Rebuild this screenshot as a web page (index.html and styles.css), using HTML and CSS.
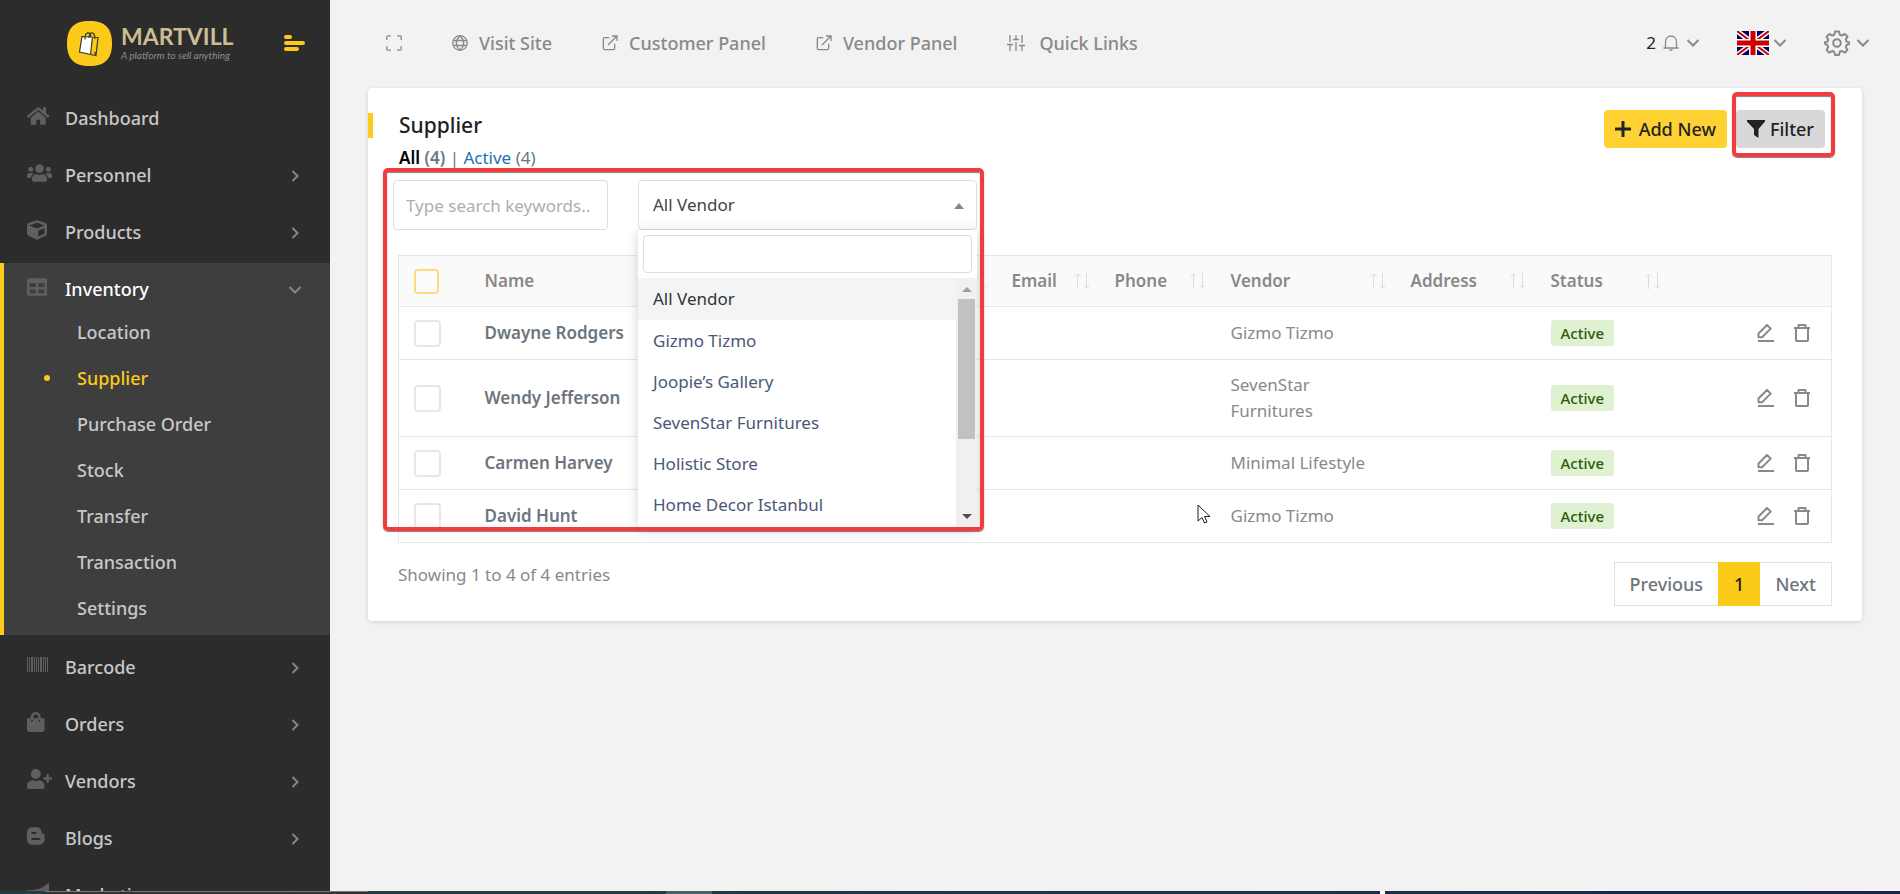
FILE: index.html
```html
<!DOCTYPE html>
<html lang="en">
<head>
  <meta charset="UTF-8" />
  <meta name="viewport" content="width=device-width, initial-scale=1.0"/>
  <title>Supplier | Martvill</title>
  <link rel="stylesheet" href="styles.css">
</head>
<body>
  <!-- shared icons -->
  <svg class="sprite" aria-hidden="true">
    <symbol id="chevron" viewBox="0 0 12 12"><path d="M3.500 1l5 5-5 5" /></symbol>
    <symbol id="chevron-down" viewBox="0 0 14 10"><path d="M1.500 2l5.500 5.500L12.500 2" /></symbol>
    <symbol id="external" viewBox="0 0 24 24"><path d="M19 13v7a2 2 0 0 1-2 2H4a2 2 0 0 1-2-2V6a2 2 0 0 1 2-2h7M15 1.500h7.500V9M9 15L22 2" /></symbol>
    <symbol id="sort" viewBox="0 0 16 16"><path d="M3.500 16V1M.5 4l3-3 3 3M12.500 0v15M9.500 12l3 3 3-3" /></symbol>
    <symbol id="edit" viewBox="0 0 18 18"><path d="M1 17h16M1.500 13.200v-3.700L10 1l3.700 3.600-8.600 8.600z" /></symbol>
    <symbol id="trash" viewBox="0 0 18 18"><path d="M1 4h16M5.500 4V1h7v3M3 4V16.200q0 .8.800.8h10.400q.8 0 .8-.8V4" /></symbol>
  </svg>

  <aside class="sidebar">
    <div class="brand">
      <a href="#" class="logo">
        <svg class="logo-mark" viewBox="0 0 45 45">
          <path d="M22.500 0C38 0 45 7 45 22.500S38 45 22.500 45 0 38 0 22.500 7 0 22.500 0z" fill="#fcca19"/>
          <path d="M15 15.500l10 .5-1.500 17.500L12.500 31z" fill="#fff"/>
          <path d="M15 15.500l16 1-2 18-5.500-1L12.500 31zM25.500 16l-2 17.500M18 18.500c-.5-8 6-9 6-2M22 17c0-7 6-7 6 1M29 34.500l-1.500-3.500" fill="none" stroke="#3a3a2a" stroke-width="1.200"/>
        </svg>
        <span class="logo-text">
          <b>MARTVILL</b>
          <i>A platform to sell anything</i>
        </span>
      </a>
      <button class="menu-toggle" aria-label="Toggle menu"><span></span><span></span><span></span></button>
    </div>

    <ul class="nav">
      <li><a href="#" class="nav-link">
        <svg class="nav-icon" viewBox="0 0 576 512" preserveAspectRatio="xMinYMid"><path d="M280 148L96 300v164a16 16 0 0 0 16 16h112a16 16 0 0 0 16-16v-96a16 16 0 0 1 16-16h64a16 16 0 0 1 16 16v96a16 16 0 0 0 16 16h112a16 16 0 0 0 16-16V300L296 148a12 12 0 0 0-16 0zM572 252l-84-69V44a12 12 0 0 0-12-12h-56a12 12 0 0 0-12 12v73l-90-74a48 48 0 0 0-61 0L4 252a12 12 0 0 0-1 16l25 31a12 12 0 0 0 17 2l235-194a12 12 0 0 1 15 0l235 194a12 12 0 0 0 17-2l26-31a12 12 0 0 0-1-16z"/></svg>
        Dashboard</a></li>
      <li><a href="#" class="nav-link">
        <svg class="nav-icon" viewBox="0 0 640 512" preserveAspectRatio="xMinYMid"><path d="M96 224a64 64 0 1 0 0-128 64 64 0 0 0 0 128zm448 0a64 64 0 1 0 0-128 64 64 0 0 0 0 128zm32 32h-64c-18 0-34 7-45 19a146 146 0 0 1 75 109h66a32 32 0 0 0 32-32v-32c0-35-29-64-64-64zm-256 0a112 112 0 1 0 0-224 112 112 0 0 0 0 224zm77 32h-8a155 155 0 0 1-138 0h-8c-64 0-115 51-115 115v29c0 26 21 48 48 48h288c27 0 48-22 48-48v-29c0-64-51-115-115-115zm-224-13c-11-12-27-19-45-19H64c-35 0-64 29-64 64v32a32 32 0 0 0 32 32h66c6-47 34-87 75-109z"/></svg>
        Personnel<svg class="arrow"><use href="#chevron"/></svg></a></li>
      <li><a href="#" class="nav-link">
        <svg class="nav-icon" viewBox="0 0 512 512" preserveAspectRatio="xMinYMid"><path d="M239 6l-208 78a48 48 0 0 0-31 45v225a48 48 0 0 0 27 43l208 104a48 48 0 0 0 43 0l208-104a48 48 0 0 0 26-43V129c0-20-12-38-31-45L273 6a48 48 0 0 0-34 0zM256 68l192 72v1l-192 78-192-78v-1zm32 356V275l160-65v134z"/></svg>
        Products<svg class="arrow"><use href="#chevron"/></svg></a></li>
      <li class="open"><a href="#" class="nav-link">
        <svg class="nav-icon" viewBox="0 0 512 512" preserveAspectRatio="xMinYMid"><path d="M464 32H48a48 48 0 0 0-48 48v352a48 48 0 0 0 48 48h416a48 48 0 0 0 48-48V80a48 48 0 0 0-48-48zM224 416H64v-96h160zm0-160H64v-96h160zm224 160H288v-96h160zm0-160H288v-96h160z"/></svg>
        Inventory<svg class="arrow"><use href="#chevron-down"/></svg></a>
        <ul class="subnav">
          <li><a href="#">Location</a></li>
          <li class="active"><a href="#">Supplier</a></li>
          <li><a href="#">Purchase Order</a></li>
          <li><a href="#">Stock</a></li>
          <li><a href="#">Transfer</a></li>
          <li><a href="#">Transaction</a></li>
          <li><a href="#">Settings</a></li>
        </ul>
      </li>
      <li><a href="#" class="nav-link">
        <svg class="nav-icon" viewBox="0 0 21 20" preserveAspectRatio="xMinYMid"><path d="M0 2h1v15H0zM2 2h1v15H2zM4 2h2v15H4zM7 2h1v15H7zM9 2h1v15H9zM11 2h1v15h-1zM13 2h2v15h-2zM16 2h1v15h-1zM18 2h1v15h-1zM20 2h1v15h-1z"/></svg>
        Barcode<svg class="arrow"><use href="#chevron"/></svg></a></li>
      <li><a href="#" class="nav-link">
        <svg class="nav-icon" viewBox="0 0 448 512" preserveAspectRatio="xMinYMid"><path d="M352 160v-32a128 128 0 0 0-256 0v32H0v272a80 80 0 0 0 80 80h288a80 80 0 0 0 80-80V160zm-192-32a64 64 0 0 1 128 0v32H160zm160 120a24 24 0 1 1 0-48 24 24 0 0 1 0 48zm-192 0a24 24 0 1 1 0-48 24 24 0 0 1 0 48z"/></svg>
        Orders<svg class="arrow"><use href="#chevron"/></svg></a></li>
      <li><a href="#" class="nav-link">
        <svg class="nav-icon" viewBox="0 0 640 512" preserveAspectRatio="xMinYMid"><path d="M624 208h-64v-64a16 16 0 0 0-16-16h-32a16 16 0 0 0-16 16v64h-64a16 16 0 0 0-16 16v32a16 16 0 0 0 16 16h64v64a16 16 0 0 0 16 16h32a16 16 0 0 0 16-16v-64h64a16 16 0 0 0 16-16v-32a16 16 0 0 0-16-16zM224 256a128 128 0 1 0 0-256 128 128 0 0 0 0 256zm90 32h-17a174 174 0 0 1-146 0h-17A134 134 0 0 0 0 422v42a48 48 0 0 0 48 48h352a48 48 0 0 0 48-48v-42a134 134 0 0 0-134-134z"/></svg>
        Vendors<svg class="arrow"><use href="#chevron"/></svg></a></li>
      <li><a href="#" class="nav-link">
        <svg class="nav-icon" viewBox="0 0 448 512" preserveAspectRatio="xMinYMid"><path fill-rule="evenodd" d="M446 222c-2-6-8-14-13-18-7-5-39-1-51-11-8-8-7-21-10-41-7-43-15-60-31-83C316 35 265 32 235 32H125C53 32 0 91 0 155v200c0 64 52 125 125 125h193c67 0 129-52 130-125V245zM135 155h80c20 0 29 10 29 24s-10 24-29 24h-80c-16 0-26-10-26-24s10-24 26-24zm178 205H136c-17 0-28-11-28-25s11-25 28-25h177c18 0 27 11 27 25s-9 25-27 25z"/></svg>
        Blogs<svg class="arrow"><use href="#chevron"/></svg></a></li>
      <li><a href="#" class="nav-link">
        <svg class="nav-icon" viewBox="0 0 24 20" preserveAspectRatio="xMinYMid"><path d="M0 7q13 1 20-6l2-1v18l-2-1q-5-4-11-5l2 6H6l-2-6H0zM19 4v9q-4-3-8-3.500V7.500Q15 7 19 4z"/></svg>
        Marketing<svg class="arrow"><use href="#chevron"/></svg></a></li>
    </ul>
  </aside>

  <div class="main">
    <header class="topbar">
      <nav class="top-links">
        <a href="#" aria-label="Full screen"><svg class="icon" viewBox="0 0 16 16"><path d="M.8 5V2Q.8.800 2 .8h3M11 .8h3q1.200 0 1.200 1.200v3M15.200 11v3q0 1.200-1.200 1.200h-3M5 15.200H2Q.8 15.200.8 14v-3"/></svg></a>
        <a href="#"><svg class="icon" viewBox="0 0 16 16"><circle cx="8" cy="8" r="7.300"/><path d="M1.500 5.500h13M1.500 10.500h13M8 .7c-5 5-5 9.600 0 14.600M8 .7c5 5 5 9.600 0 14.600"/></svg>Visit Site</a>
        <a href="#"><svg class="icon thick"><use href="#external"/></svg>Customer Panel</a>
        <a href="#"><svg class="icon thick"><use href="#external"/></svg>Vendor Panel</a>
        <a href="#"><svg class="icon wide" viewBox="0 0 18 16"><path d="M3 0v7M0 9.500h6M3 9.500V16M9 0v4.500M6 4.500h6M9 7v9M15 0v8M12 10.500h6M15 10.500V16"/></svg>Quick Links</a>
      </nav>
      <div class="top-tools">
        <button class="tool">2
          <svg class="icon" viewBox="0 0 16 16"><path d="M.5 13h15M2.500 12.500V6.500a5.500 5.500 0 0 1 11 0v6M6.500 14.500q1.500 1.500 3 0"/></svg>
          <svg class="caret"><use href="#chevron-down"/></svg>
        </button>
        <button class="tool lang" aria-label="Language">
          <svg class="flag" viewBox="0 0 32 24">
            <path fill="#006" d="M0 0h32v24H0z"/>
            <path stroke="#fff" stroke-width="5" d="M0 0l32 24M32 0L0 24"/>
            <path stroke="#c00" stroke-width="2" d="M0 0l32 24M32 0L0 24"/>
            <path stroke="#fff" stroke-width="8" d="M16 0v24M0 12h32"/>
            <path stroke="#c00" stroke-width="5" d="M16 0v24M0 12h32"/>
          </svg>
          <svg class="caret"><use href="#chevron-down"/></svg>
        </button>
        <button class="tool settings" aria-label="Settings">
          <svg class="gear" viewBox="0 0 26 26"><circle cx="13" cy="13" r="3.800"/><path d="M11 1.500h4l.8 3.300 2 .8 2.900-1.700 2.800 2.800-1.700 2.900.8 2 3.300.8v1.200l-3.300 1.400-.8 2 1.700 2.900-2.800 2.800-2.900-1.700-2 .8-.8 3.200h-4l-.8-3.200-2-.8-2.900 1.700-2.800-2.800 1.700-2.900-.8-2L1 13.800v-1.600l2.400-.6.8-2-1.700-2.900 2.800-2.800 2.900 1.700 2-.8z"/></svg>
          <svg class="caret"><use href="#chevron-down"/></svg>
        </button>
      </div>
    </header>

    <main class="card">
      <div class="card-head">
        <div>
          <h1>Supplier</h1>
          <p class="status-links"><a href="#" class="current">All</a> <b>(4)</b> | <a href="#">Active</a> (4)</p>
        </div>
        <div class="actions">
          <button class="btn btn-primary"><svg class="plus" viewBox="0 0 16 16"><path d="M8 1v14M1 8h14"/></svg>Add New</button>
          <button class="btn btn-filter"><svg class="funnel" viewBox="0 0 18 18"><path d="M0 0h18v1.500L11.500 9v9L7 15V9L0 1.500z"/></svg>Filter</button>
          <span class="mark"></span>
        </div>
      </div>

      <div class="filters">
        <input type="text" class="search" aria-label="Search" placeholder="Type search keywords..">
        <div class="vendor">
          <select class="vendor-select" aria-label="Vendor"><option>All Vendor</option></select>
          <div class="dropdown">
            <input type="text" aria-label="Search vendor">
            <div class="options">
              <ul>
                <li class="selected">All Vendor</li>
                <li>Gizmo Tizmo</li>
                <li>Joopie’s Gallery</li>
                <li>SevenStar Furnitures</li>
                <li>Holistic Store</li>
                <li>Home Decor Istanbul</li>
              </ul>
              <div class="scrollbar"><span class="scroll-up"></span><span class="thumb"></span><span class="scroll-down"></span></div>
            </div>
          </div>
        </div>
        <span class="mark"></span>
      </div>

      <div class="table-wrap">
        <table>
          <colgroup>
            <col class="c-check"><col><col class="c-email"><col class="c-phone"><col class="c-vendor"><col class="c-address"><col class="c-status"><col class="c-action">
          </colgroup>
          <thead>
            <tr>
              <th><input type="checkbox" class="check-all" aria-label="Select all"></th>
              <th><div>Name<svg class="sort"><use href="#sort"/></svg></div></th>
              <th><div>Email<svg class="sort"><use href="#sort"/></svg></div></th>
              <th><div>Phone<svg class="sort"><use href="#sort"/></svg></div></th>
              <th><div>Vendor<svg class="sort"><use href="#sort"/></svg></div></th>
              <th><div>Address<svg class="sort"><use href="#sort"/></svg></div></th>
              <th><div>Status<svg class="sort"><use href="#sort"/></svg></div></th>
              <th></th>
            </tr>
          </thead>
          <tbody>
            <tr>
              <td><input type="checkbox" aria-label="Dwayne Rodgers"></td>
              <td><a href="#">Dwayne Rodgers</a></td><td></td><td></td>
              <td>Gizmo Tizmo</td><td></td>
              <td><span class="badge">Active</span></td>
              <td class="row-actions"><button aria-label="Edit"><svg><use href="#edit"/></svg></button><button aria-label="Delete"><svg><use href="#trash"/></svg></button></td>
            </tr>
            <tr>
              <td><input type="checkbox" aria-label="Wendy Jefferson"></td>
              <td><a href="#">Wendy Jefferson</a></td><td></td><td></td>
              <td>SevenStar Furnitures</td><td></td>
              <td><span class="badge">Active</span></td>
              <td class="row-actions"><button aria-label="Edit"><svg><use href="#edit"/></svg></button><button aria-label="Delete"><svg><use href="#trash"/></svg></button></td>
            </tr>
            <tr>
              <td><input type="checkbox" aria-label="Carmen Harvey"></td>
              <td><a href="#">Carmen Harvey</a></td><td></td><td></td>
              <td>Minimal Lifestyle</td><td></td>
              <td><span class="badge">Active</span></td>
              <td class="row-actions"><button aria-label="Edit"><svg><use href="#edit"/></svg></button><button aria-label="Delete"><svg><use href="#trash"/></svg></button></td>
            </tr>
            <tr>
              <td><input type="checkbox" aria-label="David Hunt"></td>
              <td><a href="#">David Hunt</a></td><td></td><td></td>
              <td>Gizmo Tizmo</td><td></td>
              <td><span class="badge">Active</span></td>
              <td class="row-actions"><button aria-label="Edit"><svg><use href="#edit"/></svg></button><button aria-label="Delete"><svg><use href="#trash"/></svg></button></td>
            </tr>
          </tbody>
        </table>
      </div>

      <div class="card-foot">
        <p>Showing 1 to 4 of 4 entries</p>
        <div class="pagination">
          <button>Previous</button><button class="current">1</button><button>Next</button>
        </div>
      </div>
    </main>
  </div>

  <svg class="cursor" viewBox="0 0 14 20"><path d="M1 1v16l4-3.500L7.500 19l2.500-1-2.500-5.500H13z"/></svg>
  <div class="taskbar"><span class="task"></span><span class="task-light"></span><span class="task-dot"></span></div>
</body>
</html>
```
FILE: styles.css
```css
* { box-sizing: border-box; }
body {
  margin: 0;
  height: 100vh;
  display: flex;
  overflow: hidden;
  background: #f2f2f2;
  color: #898989;
  font: 17px/26px "Noto Sans", "Open Sans", sans-serif;
}
a { color: inherit; text-decoration: none; }
ul { list-style: none; margin: 0; padding: 0; }
h1, p { margin: 0; }
button, input, select { font: inherit; color: inherit; }
button { border: 0; background: none; padding: 0; cursor: pointer; }
svg { flex: none; }
.sprite { position: absolute; width: 0; height: 0; }

/* sidebar */
.sidebar {
  width: 330px;
  flex: none;
  overflow: hidden;
  background: #2c2c2c;
  color: #c8c8c8;
  font-size: 18px;
  font-weight: 500;
}
.brand {
  height: 86px;
  padding: 0 25px 0 67px;
  display: flex;
  align-items: center;
  justify-content: space-between;
}
.logo { display: flex; align-items: center; gap: 9px; }
.logo-mark { width: 45px; height: 45px; }
.logo-text { display: flex; flex-direction: column; font-family: Lato, sans-serif; }
.logo-text b { font-size: 23px; line-height: 24px; color: #cbbd94; }
.logo-text i { font-size: 10px; line-height: 14px; font-weight: 400; color: #8f8f8f; }
.menu-toggle { width: 21px; display: flex; flex-direction: column; gap: 2px; }
.menu-toggle span { height: 4px; border-radius: 2px; background: #fcca19; }
.menu-toggle span:first-child { width: 8px; }
.menu-toggle span:last-child { width: 15px; }
.nav { padding-top: 6px; display: flex; flex-direction: column; gap: 6px; }
.nav-link {
  height: 51px;
  padding: 0 28px 0 27px;
  display: flex;
  align-items: center;
}
.nav-icon {
  width: 27px;
  height: 20px;
  margin: 0 11px 3px 0;
  fill: #5f5f5f;
}
.arrow {
  width: 14px;
  height: 12px;
  margin: 3px 0 0 auto;
  fill: none;
  stroke: #868686;
  stroke-width: 2;
}
.open {
  background: #3e3e3e;
  box-shadow: inset 4px 0 #fcca19;
  padding-bottom: 4px;
}
.open > .nav-link { color: #fff; }
.subnav { margin-top: -5px; }
.subnav a {
  height: 46px;
  padding-left: 44px;
  display: flex;
  align-items: center;
  gap: 27px;
}
.subnav a::before { content: ""; width: 6px; height: 6px; border-radius: 50%; }
.subnav .active { color: #fcca19; }
.subnav .active a::before { background: #fcca19; }

/* top bar */
.main { flex: 1; min-width: 0; padding: 0 38px; }
.topbar {
  height: 88px;
  padding: 0 0 2px 18px;
  margin-right: -8px;
  display: flex;
  align-items: center;
  justify-content: space-between;
}
.top-links { display: flex; gap: 50px; font-size: 18px; font-weight: 500; }
.top-links a { display: flex; align-items: center; gap: 11px; }
.icon, .gear {
  width: 16px;
  height: 16px;
  fill: none;
  stroke: #898989;
  stroke-width: 1.3;
}
.icon.thick { stroke-width: 2; }
.icon.wide { width: 18px; margin-right: 3px; }
.gear { width: 26px; height: 26px; stroke-width: 2; stroke-linejoin: round; }
.top-tools { display: flex; align-items: center; gap: 37px; }
.tool { display: flex; align-items: center; gap: 7px; color: #222; }
.tool.lang { gap: 4px; }
.tool.settings { gap: 6px; }
.flag { width: 32px; height: 24px; }
.caret { width: 14px; height: 10px; fill: none; stroke: #898989; stroke-width: 2; }

/* card */
.card {
  padding: 22px 30px 15px;
  background: #fff;
  border-radius: 4px;
  box-shadow: 0 1px 4px rgba(0, 0, 0, .14);
}
.card-head { display: flex; justify-content: space-between; height: 70px; }
h1 {
  margin: 3px 0 8px -30px;
  padding-left: 26px;
  border-left: 5px solid #fcca19;
  font-size: 21px;
  line-height: 25px;
  font-weight: 500;
  color: #222;
}
.status-links { padding-left: 1px; line-height: 24px; color: #6c757d; }
.status-links a { color: #2271b1; }
.status-links .current { color: #000; font-weight: 600; }
.status-links b { font-weight: 600; }
.actions {
  position: relative;
  display: flex;
  align-items: flex-start;
  gap: 9px;
  margin-right: 7px;
}
.btn {
  height: 38px;
  padding: 0 11px;
  display: flex;
  align-items: center;
  border-radius: 4px;
  font-size: 18px;
  font-weight: 500;
  color: #222;
}
.btn-primary { background: #ffd233; gap: 8px; }
.btn-filter { background: #d8d8d8; gap: 5px; }
.plus { width: 16px; height: 16px; stroke: #222; stroke-width: 3; stroke-linecap: round; }
.funnel { width: 18px; height: 18px; fill: #222; }

/* red highlight frames */
.mark {
  position: absolute;
  border: 4px solid #f43b3b;
  border-radius: 5px;
  box-shadow: 0 1px 1px rgba(0, 0, 0, .5), inset 0 1px 1px rgba(0, 0, 0, .5);
  pointer-events: none;
}
.actions .mark { right: -10px; top: -18px; width: 103px; height: 65px; }
.filters .mark { left: -10px; top: -12px; width: 601px; height: 363px; }

/* filters */
.filters {
  position: relative;
  z-index: 1;
  display: flex;
  gap: 30px;
  margin-left: -5px;
}
.search, .vendor-select {
  width: 215px;
  height: 50px;
  padding: 0 12px;
  border: 1px solid #d9dde5;
  border-radius: 4px;
  background: #fff;
}
.search::placeholder { color: #aeaeae; }
.vendor { position: relative; width: 339px; }
.vendor::after {
  content: "";
  position: absolute;
  right: 13px;
  top: 23px;
  border: 5px solid transparent;
  border-top: 0;
  border-bottom: 6px solid #888;
}
.vendor-select {
  width: 100%;
  padding: 0 14px;
  appearance: none;
  color: #444;
}
.dropdown {
  position: absolute;
  top: 50px;
  left: 0;
  width: 100%;
  height: 298px;
  background: #fff;
  border-radius: 4px;
  box-shadow: 0 2px 12px rgba(60, 70, 100, .25);
}
.dropdown input {
  display: block;
  width: 329px;
  height: 38px;
  margin: 5px;
  border: 1px solid #d9dde5;
  border-radius: 4px;
}
.options { display: flex; height: 249px; color: #4a5875; }
.options ul { flex: 1; }
.options li { height: 41px; padding: 8px 15px; }
.options .selected { height: 42px; background: #f3f4f6; color: #333; }
.scrollbar {
  width: 21px;
  display: flex;
  flex-direction: column;
  align-items: center;
  background: #f0f0f0;
}
.scroll-up, .scroll-down { border: 5px solid transparent; }
.scroll-up { margin-top: 9px; border-top: 0; border-bottom-color: #a0a0a0; }
.scroll-down { margin: auto 0 8px; border-bottom: 0; border-top-color: #505050; }
.thumb { width: 17px; height: 140px; margin-top: 7px; background: #c1c1c1; }

/* table */
.table-wrap { margin-top: 25px; }
table {
  width: 100%;
  table-layout: fixed;
  border-collapse: collapse;
  border: 1px solid #e7e7e7;
}
.c-check { width: 73px; }
.c-email { width: 103px; }
.c-phone { width: 116px; }
.c-vendor { width: 180px; }
.c-address { width: 140px; }
.c-status { width: 135px; }
.c-action { width: 159px; }
tr { border-bottom: 1px solid #e7e7e7; }
th, td { padding: 0 12px 0 13px; text-align: left; }
th { height: 51px; background: #fafafa; font-weight: 600; }
th div { display: flex; align-items: center; justify-content: space-between; }
td { height: 53px; padding-top: 12px; padding-bottom: 12px; }
td a { font-weight: 600; color: #6c757d; }
.sort { width: 16px; height: 16px; fill: none; stroke: #dcdcdc; stroke-width: 1; }
table input {
  display: block;
  appearance: none;
  width: 27px;
  height: 27px;
  margin: 0 0 0 2px;
  border: 2px solid #e7e7e7;
  border-radius: 4px;
  background: #fff;
}
.check-all {
  width: 25px;
  height: 25px;
  border-color: #fadb80;
  background: #fcfcfc;
}
td:first-child { padding-top: 0; padding-bottom: 0; }
.badge {
  display: inline-block;
  padding: 0 10px;
  border-radius: 3px;
  background: #dff1d0;
  color: #2a5a0a;
  font-size: 15px;
  font-weight: 500;
  vertical-align: top;
}
.row-actions { padding-right: 20px; text-align: right; font-size: 0; }
.row-actions button { margin-left: 18px; vertical-align: middle; }
.row-actions svg {
  width: 18px;
  height: 18px;
  display: block;
  fill: none;
  stroke: #898989;
  stroke-width: 2;
  stroke-linejoin: round;
}

/* footer */
.card-foot { display: flex; justify-content: space-between; margin-top: 19px; }
.pagination { display: flex; font-size: 18px; font-weight: 500; color: #6c757d; }
.pagination button { height: 44px; padding: 0 15px; border: 1px solid #dee2e6; }
.pagination .current { border-color: #fcca19; background: #fcca19; color: #222; }
.pagination button:first-child { border-right: 0; }
.pagination button:last-child { border-left: 0; }

/* pointer and desktop edge */
.cursor {
  position: absolute;
  left: 1197px;
  top: 504px;
  width: 14px;
  height: 20px;
  fill: #fff;
  stroke: #1a1a2a;
}
.taskbar {
  position: absolute;
  left: 0;
  right: 0;
  bottom: 0;
  height: 3px;
  padding-left: 45px;
  display: flex;
  background: linear-gradient(90deg, #233c44 30%, #17264a);
}
.task { width: 323px; background: #333; border-top: 1px solid #777; }
.task-light { width: 46px; margin-left: 298px; background: #4a5f68; }
.task-dot { width: 5px; margin-left: 668px; background: #fff; }
```
